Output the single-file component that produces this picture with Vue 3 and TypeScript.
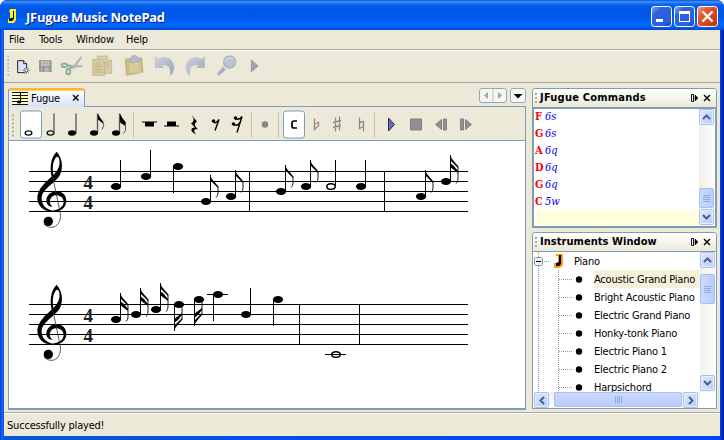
<script setup lang="ts">
interface Note {
  x: number
  y: number
  kind: 'whole' | 'half' | 'quarter' | 'eighth' | 'sixteenth'
  stem?: number
  down?: boolean
  ledger?: boolean
}
interface Staff {
  top: number
  bars: number[]
  notes: Note[]
}

const menus = ['File', 'Tools', 'Window', 'Help']
const staves: Staff[] = [
  {
    top: 171,
    bars: [249, 384],
    notes: [
      { x: 116, y: 186, kind: 'quarter', stem: 160 },
      { x: 146, y: 176, kind: 'quarter', stem: 150 },
      { x: 178, y: 166, kind: 'quarter', stem: 193, down: true },
      { x: 206, y: 201, kind: 'eighth', stem: 175 },
      { x: 231, y: 196, kind: 'eighth', stem: 170 },
      { x: 281, y: 191, kind: 'eighth', stem: 165 },
      { x: 306, y: 186, kind: 'eighth', stem: 160 },
      { x: 331, y: 186, kind: 'half', stem: 160 },
      { x: 361, y: 186, kind: 'quarter', stem: 160 },
      { x: 421, y: 196, kind: 'eighth', stem: 170 },
      { x: 446, y: 181, kind: 'sixteenth', stem: 155 },
    ],
  },
  {
    top: 304,
    bars: [299, 359],
    notes: [
      { x: 116, y: 319, kind: 'sixteenth', stem: 293 },
      { x: 136, y: 314, kind: 'sixteenth', stem: 288 },
      { x: 156, y: 309, kind: 'sixteenth', stem: 283 },
      { x: 179, y: 304, kind: 'sixteenth', stem: 331, down: true },
      { x: 199, y: 299, kind: 'sixteenth', stem: 326, down: true },
      { x: 218, y: 294, kind: 'quarter', stem: 321, down: true, ledger: true },
      { x: 246, y: 314, kind: 'quarter', stem: 288 },
      { x: 278, y: 299, kind: 'quarter', stem: 326, down: true },
      { x: 336, y: 354, kind: 'whole', ledger: true },
    ],
  },
]
const stemX = (n: Note) => (n.down ? n.x - 5 : n.x + 4)
const commands = [
  ['F', '6s'],
  ['G', '6s'],
  ['A', '6q'],
  ['D', '6q'],
  ['G', '6q'],
  ['C', '5w'],
]
const instruments = [
  'Acoustic Grand Piano',
  'Bright Acoustic Piano',
  'Electric Grand Piano',
  'Honky-tonk Piano',
  'Electric Piano 1',
  'Electric Piano 2',
  'Harpsichord',
]
</script>

<template>
  <div class="window">
    <header class="title">
      <svg class="logo" width="9" height="15" viewBox="0 0 9 15"><path d="M2 0h6v11l-2 3H0v-4h2V3H1z" fill="#ffef20" /><path d="M5 2h1v8l-2 2H1v-2l2-1h2z" fill="#001020" /></svg>
      <span class="title-text">JFugue Music NotePad</span>
      <div class="win-btns">
        <svg width="21" height="21" viewBox="0 0 21 21"><rect x=".5" y=".5" width="20" height="20" rx="3" fill="url(#bl)" stroke="#fff" /><path d="M5 13h7v3H5z" fill="#fff" /></svg>
        <svg width="21" height="21" viewBox="0 0 21 21"><rect x=".5" y=".5" width="20" height="20" rx="3" fill="url(#bl)" stroke="#fff" /><path d="M5 5h11v11H5zM6 8v7h9V8z" fill="#fff" fill-rule="evenodd" /></svg>
        <svg width="21" height="21" viewBox="0 0 21 21"><rect x=".5" y=".5" width="20" height="20" rx="3" fill="url(#rd)" stroke="#fff" /><path d="M5.500 5.500l10 10M15.500 5.500l-10 10" stroke="#fff" stroke-width="2.400" /></svg>
      </div>
      <svg class="defs" width="0" height="0">
        <defs>
          <linearGradient id="bl" x1="0" y1="0" x2="1" y2="1"><stop offset="0" stop-color="#7da4f0" /><stop offset=".3" stop-color="#2e62dc" /><stop offset=".75" stop-color="#2a5fe4" /><stop offset="1" stop-color="#1840b8" /></linearGradient>
          <linearGradient id="rd" x1="0" y1="0" x2="1" y2="1"><stop offset="0" stop-color="#f0a080" /><stop offset=".3" stop-color="#e45a34" /><stop offset="1" stop-color="#c03008" /></linearGradient>
          <linearGradient id="steel" x1="0" y1="0" x2="1" y2="1"><stop offset="0" stop-color="#cdd3da" /><stop offset="1" stop-color="#98a6bb" /></linearGradient>
        </defs>
      </svg>
    </header>

    <div class="content">
      <nav class="menu"><span v-for="m in menus" :key="m" :class="'menu-' + m.toLowerCase()">{{ m }}</span></nav>

      <div class="toolbar">
        <svg width="262" height="31" viewBox="12 153 786 93">
          <g fill="#b8b5a5"><rect v-for="i in 6" :key="i" x="22" :y="156 + i * 11" width="5" height="5" /></g>
          <g class="new"><path d="M53 182h18l9 9v27H53z" fill="#dfe3fa" stroke="#222" stroke-width="3" /><path d="M71 182v9h9" fill="#fff" stroke="#222" stroke-width="3" /><circle cx="79" cy="211" r="8" fill="#eee" /><path d="M79 201v20M69 211h20M72 204l14 14M86 204l-14 14" stroke="#222" stroke-width="2" /><circle cx="79" cy="211" r="3" fill="#fff" /></g>
          <g class="save"><path d="M117 180h35l3 3v33h-35l-3-3z" fill="#999" /><path d="M123 182h25v15h-25z" fill="#c8c8c8" /><path d="M126 186h19M126 191h19" stroke="#999" stroke-width="2" /><path d="M123 203h23v12h-23z" fill="#bbb" /><path d="M127 204h6v11h-6z" fill="#888" /></g>
          <g class="cut" fill="none"><path d="M216 203L243 169l1 7-23 31zM205 196l40 0 3 4-42 3z" fill="#b5bdc3" stroke="#99a5ad" /><ellipse cx="193" cy="196" rx="8" ry="5.500" stroke="#8bb398" stroke-width="6" /><ellipse cx="205" cy="215" rx="6" ry="8" stroke="#8bb398" stroke-width="6" /><path d="M201 195l14 3M209 207l6-6" stroke="#8bb398" stroke-width="6" /></g>
          <g class="copy" stroke="#b9aa7b" stroke-width="2"><path d="M292 168h28l15 13v39h-43z" fill="#d9cfaa" /><path d="M320 168v13h15" fill="#eee6cb" /><path d="M278 178h24l12 11v37h-36z" fill="#d8cc9f" /><path d="M284 192h18M284 200h24M284 208h24M284 216h22M312 188h16M320 196h9M320 204h9" stroke="#a99e7c" /></g>
          <g class="paste"><path d="M376 177l49-4 4 44-50 9z" fill="#cdbb85" stroke="#b5a575" stroke-width="2" /><path d="M387 187l32-2 2 30-32 4z" fill="#d9ca9b" /><path d="M389 183l4-8c0-9 18-12 20-2l7 7-2 5-28 2z" fill="#b5bbd1" stroke="#979eb7" stroke-width="2" /><path d="M403 226l26-9-17-2z" fill="#c9c6bd" /></g>
          <g fill="url(#steel)" stroke="#b4bcc6" stroke-width="1.500"><path d="M466 170l8 8c20-11 47-4 48 24 0 11-4 20-11 25 0-18 1-35-27-32l7 8h-25z" /><path d="M614 170l-8 8c-20-11-47-4-48 24 0 11 4 20 11 25 0-18-1-35 27-32l-7 8h25z" /></g>
          <g class="find"><path d="M670 200l-18 20 4 7 21-18z" fill="#a8b2c3" stroke="#929fb4" /><circle cx="689" cy="186" r="18" fill="#b9c4d1" stroke="#aab5c2" stroke-width="4" /><path d="M676 184c2-10 18-14 24-5" stroke="#d5dce3" stroke-width="4" fill="none" /></g>
          <path d="M754 180v36l20-18z" fill="#a6a5ad" stroke="#858494" stroke-width="2" />
        </svg>
      </div>

      <div class="body">
        <section class="editor">
          <div class="tabs">
            <div class="tab">
              <svg width="16" height="13" viewBox="0 0 16 13"><path d="M0 0h16v13H0z" fill="#ffffc0" /><path d="M0 .5h16M0 3.500h16M0 6.500h16M0 9.500h16M0 12.500h16M8.500 1v9" stroke="#111" /><ellipse cx="7" cy="10" rx="2.200" ry="1.600" /></svg>
              <span>Fugue</span>
              <svg class="x" width="8" height="8" viewBox="0 0 8 8"><path d="M1 1l5.500 5.500M6.500 1L1 6.500" stroke="#111" stroke-width="1.500" /></svg>
            </div>
            <div class="tab-nav">
              <svg width="28" height="15" viewBox="0 0 28 15"><rect x=".5" y=".5" width="27" height="14" rx="2.500" fill="#f6f5f0" stroke="#8fa9bd" /><path d="M14 1v13" stroke="#b9c3c8" /><path d="M9 4v7L5 7.500zM19 4v7l4-3.500z" fill="#aaa794" /></svg>
              <svg width="16" height="15" viewBox="0 0 16 15"><rect x=".5" y=".5" width="15" height="14" rx="2.500" fill="#fbfbf8" stroke="#8fa9bd" /><path d="M3.500 6h9L8 10.500z" /></svg>
            </div>
          </div>
          <svg class="note-tools" width="516" height="32" viewBox="9 108 516 32">
            <g fill="#b3b0a0"><rect v-for="i in 6" :key="i" x="12" :y="111 + i * 4" width="2" height="2" /></g>
            <g fill="#fff" stroke="#7f9db9"><rect x="20.500" y="111.500" width="21" height="27" rx="2.500" /><rect x="283.500" y="111.500" width="21" height="27" rx="2.500" /></g>
            <g fill="none" stroke="#111" stroke-width="1.400"><ellipse cx="28.500" cy="133.500" rx="3.300" ry="2.100" /><ellipse cx="50.500" cy="133.500" rx="3.300" ry="2.100" /></g>
            <path d="M54 114v20M76 114v20M97.500 114v20M119.500 114v20" stroke="#555" stroke-width="1.300" />
            <g fill="#000"><ellipse cx="72" cy="133.500" rx="4" ry="2.700" /><ellipse cx="94" cy="133.500" rx="4" ry="2.700" /><ellipse cx="116" cy="133.500" rx="4" ry="2.700" /><path d="M98 114l2 4 3 4v2l-5-4zM120 114l2 4 4 5v2l-6-6zM120 119l6 6v2l-6-4z" /></g>
            <path d="M103 122q2 4-1 8M125.500 123v8l-2 3" fill="none" stroke="#555" />
            <path d="M133.500 113v25M251.500 113v25M278.500 113v25M374.500 113v25" stroke="#c5c2a8" />
            <path d="M142 122h15v1h-3v4h-9v-4h-3zM164 127v-1h3v-4h9v4h3v1z" />
            <path d="M191 115l6 7c-3 2-3 4 1 8-4-1-5 1-2 5-6-3-6-7-1-7l-4-4c4-3 3-5 0-9z" />
            <g stroke="#000" fill="#000"><path d="M213 121c1 4 4 2 6-1l-4 11M235 118c1 3 5 2 7-1l-5 16M233 124c2 3 5 2 7-1" fill="none" stroke-width="1.400" /><circle cx="213.500" cy="121.500" r="1.300" /><circle cx="235.500" cy="118.500" r="1.300" /><circle cx="233.500" cy="124.500" r="1.300" /></g>
            <circle cx="265" cy="125" r="3.200" fill="#858585" />
            <path d="M297 121.500h-3q-2 0-2 2v3q0 2 2 2h3" fill="none" stroke="#000" stroke-width="1.700" />
            <g fill="none" stroke="#8b8b8b" stroke-width="1.300"><path d="M314.500 119v11l4-4v-3l-3 1M335.500 118v14M339.500 117v14M333 123l8-2M333 128l8-2M359.500 118v11l4-2M363.500 132v-10l-4 1" /></g>
            <path d="M388.500 118.500v13l6-6.500z" fill="#6a6cb0" stroke="#282a60" />
            <g fill="#919191" stroke="#808080"><path d="M410.500 119.500h11v11h-11zM435.500 125l6-5v10zM443.500 119.500h3v11h-3zM460.500 119.500h3v11h-3zM465.500 120v10l6-5z" /></g>
          </svg>
          <svg class="sheet" width="516" height="267" viewBox="9 141 516 267">
            <g v-for="s in staves" :key="s.top">
              <g shape-rendering="crispEdges">
                <rect v-for="i in 5" :key="i" x="29" :y="s.top + (i - 1) * 10" width="439" height="1" />
                <rect v-for="b in s.bars" :key="b" :x="b" :y="s.top" width="1" height="41" />
              </g>
              <g :transform="`translate(20 ${s.top - 26}) scale(.3333)`">
                <path d="M100 112C86 75 91 38 110 20C130 42 131 77 114 99C94 121 68 133 65 157C63 178 78 194 98 197L96 200C70 199 51 182 52 156C54 130 78 110 98 92C116 75 122 60 117 40C114 34 110 34 107 38C96 52 97 78 103 106Z" />
                <path d="M96 200C122 203 140 187 139 166C138 148 124 139 110 139C92 139 78 152 79 170C81 180 88 185 98 185C90 180 88 172 90 164C94 154 102 150 110 151C122 152 131 160 131 172C130 186 116 196 96 197Z" />
                <path d="M98 95L121 205C124 230 112 246 96 247C86 247 76 244 72 236" fill="none" stroke="#333" stroke-width="2.400" />
                <circle cx="85" cy="229" r="14" />
              </g>
              <text class="time" x="83.500" :y="s.top + 18">4</text>
              <text class="time" x="83.500" :y="s.top + 38">4</text>
              <g v-for="n in s.notes" :key="n.x">
                <rect v-if="n.ledger" :x="n.x - 11" :y="n.y" width="21" height="1" shape-rendering="crispEdges" />
                <ellipse v-if="n.kind === 'half' || n.kind === 'whole'" :cx="n.x" :cy="n.y + 0.5" rx="4.200" ry="2.800" :fill="n.kind === 'half' ? '#fff' : 'none'" stroke="#000" stroke-width="1.500" />
                <ellipse v-else :cx="n.x" :cy="n.y + 0.5" rx="5.100" ry="3.500" />
                <rect v-if="n.stem" :x="stemX(n)" :y="Math.min(n.stem, n.y)" width="1" :height="Math.abs(n.stem - n.y)" shape-rendering="crispEdges" />
                <g v-if="n.kind === 'eighth'" :transform="`translate(${stemX(n)} ${n.stem})`"><path d="M0 0l2 4 6 7v2l-8-8z" /><path d="M8 11v7q0 3-2 4.500" fill="none" stroke="#000" stroke-width=".9" /></g>
                <g v-if="n.kind === 'sixteenth'" :transform="`translate(${stemX(n)} ${n.stem}) scale(1 ${n.down ? -1 : 1})`"><path d="M0 0l2 4 6 7v2l-8-8zM0 8l4 3 4 5v2l-8-6z" /><path d="M8 11v13q0 3-2 4.500" fill="none" stroke="#000" stroke-width=".9" /></g>
              </g>
            </g>
          </svg>
        </section>

        <aside class="side">
          <section class="panel commands">
            <div class="panel-head">
              <i class="grip"></i><b>JFugue Commands</b>
              <svg width="24" height="10" viewBox="0 0 24 10"><path d="M2.500 1.500h2v7h-2z" stroke="#111" fill="#fff" /><path d="M6 2v6l3-3z" stroke="#111" stroke-width=".6" /><path d="M15 2l6 6M21 2l-6 6" stroke="#111" stroke-width="1.500" /></svg>
            </div>
            <div class="panel-body">
              <div class="code">
                <div v-for="(c, i) in commands" :key="i" class="cmd"><b>{{ c[0] }}</b><em>{{ c[1] }}</em></div>
                <div class="current"></div>
              </div>
              <div class="vscroll">
                <span class="sb"><svg width="9" height="6" viewBox="0 0 9 6"><path d="M1 5l3.500-3.500L8 5" /></svg></span>
                <span class="thumb"><i></i><i></i><i></i><i></i></span>
                <span class="sb"><svg width="9" height="6" viewBox="0 0 9 6"><path d="M1 1l3.500 3.500L8 1" /></svg></span>
              </div>
            </div>
          </section>
          <section class="panel instruments">
            <div class="panel-head">
              <i class="grip"></i><b>Instruments Window</b>
              <svg width="24" height="10" viewBox="0 0 24 10"><path d="M2.500 1.500h2v7h-2z" stroke="#111" fill="#fff" /><path d="M6 2v6l3-3z" stroke="#111" stroke-width=".6" /><path d="M15 2l6 6M21 2l-6 6" stroke="#111" stroke-width="1.500" /></svg>
            </div>
            <div class="tree-grid">
              <div class="tree">
                <div class="node root">
                  <svg width="40" height="18" viewBox="0 0 40 18"><path d="M4.500 0v18M10 9.500h6" stroke="#999" stroke-dasharray="1 1" /><rect x=".5" y="5.500" width="8" height="8" rx="1" fill="#f4f2ea" stroke="#7898b5" /><path d="M2 9.500h5" stroke="#000" /><path d="M22 2h7v11l-3 3h-6v-5h4V4h-2z" fill="#ff9c10" /><path d="M25 3h2v9l-2 2h-3v-3l3-1z" /></svg>
                  <span>Piano</span>
                </div>
                <div v-for="(n, i) in instruments" :key="n" class="node" :class="{ sel: i === 0 }">
                  <svg width="60" height="18" viewBox="0 0 60 18"><path d="M4.500 0v18M24.500 0v18M25 9.500h13" stroke="#999" stroke-dasharray="1 1" /><circle cx="45" cy="9.500" r="3.200" /></svg>
                  <span>{{ n }}</span>
                </div>
              </div>
              <div class="vscroll">
                <span class="sb"><svg width="9" height="6" viewBox="0 0 9 6"><path d="M1 5l3.500-3.500L8 5" /></svg></span>
                <span class="thumb"><i></i><i></i><i></i><i></i></span>
                <span class="sb"><svg width="9" height="6" viewBox="0 0 9 6"><path d="M1 1l3.500 3.500L8 1" /></svg></span>
              </div>
              <div class="hscroll">
                <span class="sb"><svg width="6" height="9" viewBox="0 0 6 9"><path d="M5 1L1.500 4.500 5 8" /></svg></span>
                <span class="thumb"><i></i><i></i><i></i><i></i></span>
                <span class="sb"><svg width="6" height="9" viewBox="0 0 6 9"><path d="M1 1l3.500 3.500L1 8" /></svg></span>
              </div>
            </div>
          </section>
        </aside>
      </div>
      <footer class="status">Successfully played!</footer>
    </div>
  </div>
</template>

<style>
body { background: #fff; overflow: hidden; }
</style>
<style scoped>
* { box-sizing: border-box; }
svg { display: block; flex: none; }
.window { width: 724px; height: 440px; display: flex; flex-direction: column; background: linear-gradient(90deg, #0831d9, #166aee 2px, #0855dd 4px, #0048e8 720px, #0030c8 722px, #00138c); border-radius: 7px 7px 0 0; overflow: hidden; font: 11px/14px "DejaVu Sans Condensed", "DejaVu Sans", sans-serif; letter-spacing: -.2px; color: #000; padding-bottom: 4px; }
.title { height: 30px; flex: none; display: flex; align-items: center; padding: 2px 6px 0 8px; background: linear-gradient(#0a53d8 0, #3f93ff 2px, #0c67ee 4px, #0055e5 8px, #0058e8 16px, #0066fb 24px, #0061f4 27px, #0046ca 30px); }
.logo { margin: 0 9px 0 0; }
.title-text { flex: 1; color: #fff; font: bold 13px/16px "Open Sans", sans-serif; letter-spacing: -.28px; padding-top: 1px; text-shadow: 1px 1px 0 #0a1883; white-space: nowrap; }
.win-btns { display: flex; gap: 2px; }
.defs { width: 0; }
.content { flex: 1; min-height: 0; margin: 0 4px; background: #ece9d8; display: flex; flex-direction: column; }
.menu { height: 20px; flex: none; display: flex; padding: 3px 0 0 5px; border-bottom: 1px solid #aca899; }
.menu span { width: 50px; white-space: nowrap; }
.menu .menu-file { width: 30px; }
.menu .menu-tools { width: 37px; }
.toolbar { height: 33px; flex: none; border-top: 1px solid #fff; border-bottom: 1px solid #aca899; }
.body { height: 330px; flex: none; display: flex; padding: 5px 3px 3px 4px; gap: 6px; border-bottom: 1px solid #aca899; }
.editor { width: 518px; display: flex; flex-direction: column; height: 322px; }
.tabs { height: 19px; flex: none; display: flex; justify-content: space-between; align-items: flex-start; border-bottom: 1px solid #7f9db9; }
.tab { width: 77px; height: 19px; display: flex; align-items: center; padding-left: 3px; background: linear-gradient(#fff, #d5e2f8); border: 1px solid #7f9db9; border-top: 2px solid #ffb52c; border-bottom: 0; border-radius: 3px 3px 0 0; box-shadow: inset 0 1px #ffd36c; }
.tab span { margin-left: 3px; width: 41px; }
.tab .x { margin-bottom: 2px; }
.tab-nav { display: flex; gap: 3px; }
.note-tools { width: 518px; padding: 0; border: solid #7f9db9; border-width: 0 1px; height: 33px; }
.sheet { background: #fff; border: 1px solid #7f9db9; border-bottom-width: 2px; width: 518px; height: 270px; }
.time { font: bold 19px "Liberation Serif", serif; letter-spacing: 0; fill: #222; }
.side { width: 186px; display: flex; flex-direction: column; gap: 4px; }
.panel { border: 1px solid #7f9db9; border-radius: 3px 3px 0 0; display: flex; flex-direction: column; background: #fff; }
.commands { height: 140px; }
.instruments { height: 178px; }
.panel-head { height: 19px; flex: none; display: flex; align-items: center; padding: 0 3px 0 2px; background: linear-gradient(#fff, #ece9d8); border-bottom: 1px solid #7f9db9; border-radius: 3px 3px 0 0; }
.panel-head b { flex: 1; margin-left: 3px; white-space: nowrap; letter-spacing: .22px; }
.instruments .panel-head b { letter-spacing: .05px; }
.grip { width: 2px; height: 11px; background: repeating-linear-gradient(#aaa 0 2px, transparent 2px 4px); }
.panel-body { flex: 1; display: flex; border: 1px solid #7f9db9; min-height: 0; }
.code { flex: 1; overflow: hidden; letter-spacing: 0; }
.cmd { height: 17px; line-height: 17px; padding-left: 1px; display: flex; }
.code .cmd:first-child { height: 16px; line-height: 15px; }
.cmd b { width: 10px; color: red; font-family: "DejaVu Serif Condensed", "DejaVu Serif", serif; }
.cmd em { color: #0000e8; font-family: "DejaVu Serif Condensed", "DejaVu Serif", serif; }
.current { height: 17px; margin-left: 1px; background: #ffffdc; }
.vscroll { width: 16px; display: flex; flex-direction: column; background: linear-gradient(90deg, #f0efe9, #fefefb); }
.sb { width: 15px; height: 16px; flex: none; display: flex; align-items: center; justify-content: center; border: 1px solid #a9bfec; box-shadow: inset 0 0 0 1px #e6eeff; border-radius: 2px; background: linear-gradient(135deg, #dfe8ff, #b7ccfa); }
.sb path { fill: none; stroke: #4d6185; stroke-width: 2; }
.thumb { display: flex; flex-direction: column; align-items: center; justify-content: center; gap: 1px; border: 1px solid #a9bfec; border-radius: 2px; background: linear-gradient(90deg, #cad9ff, #b9cdfb); width: 15px; }
.thumb i { width: 7px; height: 1px; background: #8fa9e8; }
.commands .thumb { height: 20px; margin-top: 63px; margin-bottom: 1px; }
.tree-grid { flex: 1; min-height: 0; display: grid; grid-template-columns: 1fr 16px; grid-template-rows: 140px 16px; padding-left: 1px; background: #fff; }
.tree { overflow: hidden; }
.node { height: 18px; display: flex; align-items: center; white-space: nowrap; }
.node span { flex: 1; line-height: 19px; height: 18px; }
.sel span { background: #f5f0dc; }
.instruments .vscroll .thumb { height: 30px; margin: 6px 0 71px; }
.hscroll { display: flex; background: linear-gradient(#f0efe9, #fefefb); gap: 1px; }
.hscroll .thumb { flex-direction: row; width: 128px; height: 15px; margin-left: 4px; background: linear-gradient(#cad9ff, #b9cdfb); }
.hscroll .thumb i { width: 1px; height: 7px; }
.status { flex: 1; border-top: 1px solid #fff; padding: 5px 0 0 3px; }
</style>
